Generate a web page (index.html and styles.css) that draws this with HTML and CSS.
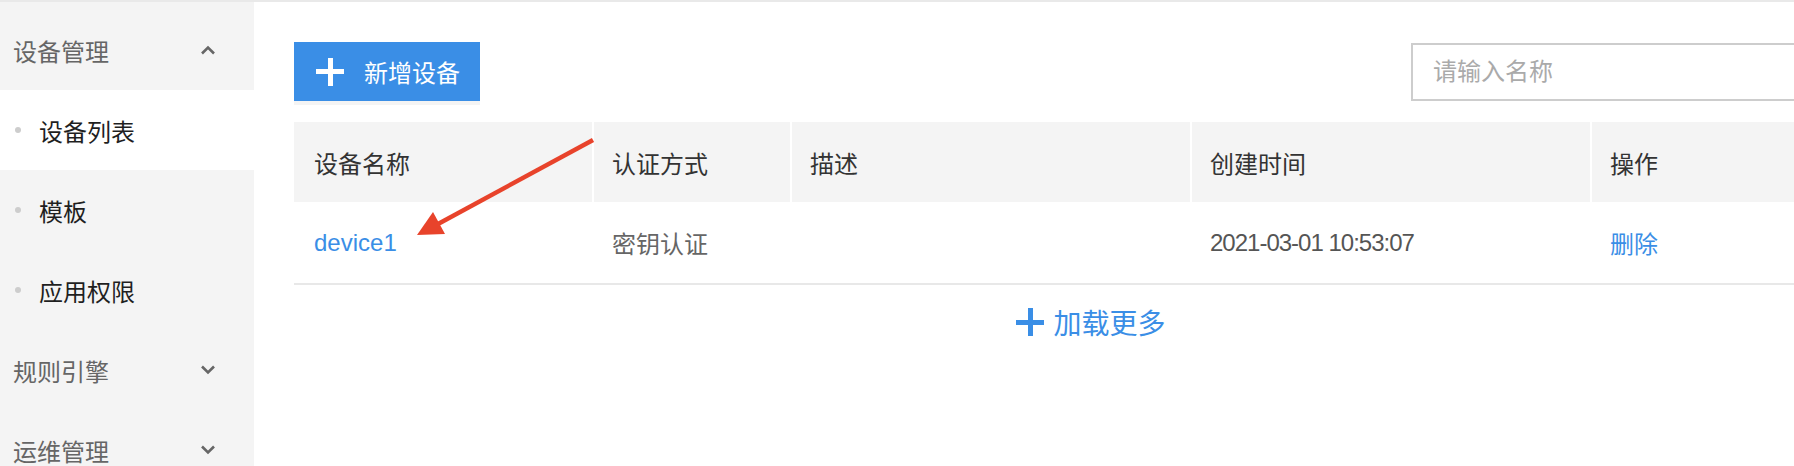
FILE: index.html
```html
<!DOCTYPE html>
<html lang="zh-CN">
<head>
  <meta charset="UTF-8" />
  <meta name="viewport" content="width=device-width, initial-scale=1.0"/>
  <title>设备列表</title>
  <link rel="stylesheet" href="styles.css">
</head>
<body>
  <div class="page">
    <!-- sidebar -->
    <div class="side">
      <div class="group-title">
        <span>设备管理</span>
        <svg class="chev" width="16" height="10" viewBox="0 0 16 10"><polyline points="2,8.5 8,2.5 14,8.5" /></svg>
      </div>
      <div class="sub-item active">设备列表</div>
      <div class="sub-item">模板</div>
      <div class="sub-item">应用权限</div>
      <div class="group-title">
        <span>规则引擎</span>
        <svg class="chev" width="16" height="10" viewBox="0 0 16 10"><polyline points="2,1.5 8,7.5 14,1.5" /></svg>
      </div>
      <div class="group-title">
        <span>运维管理</span>
        <svg class="chev" width="16" height="10" viewBox="0 0 16 10"><polyline points="2,1.5 8,7.5 14,1.5" /></svg>
      </div>
    </div>

    <!-- main -->
    <div class="main">
      <div class="content">
        <div class="toolbar">
          <button class="add-btn"><span class="plus"></span>新增设备</button>
          <input class="search" type="text" placeholder="请输入名称" />
        </div>

        <div class="table">
          <div class="row head">
            <div class="cell">设备名称</div>
            <div class="cell">认证方式</div>
            <div class="cell">描述</div>
            <div class="cell">创建时间</div>
            <div class="cell">操作</div>
          </div>
          <div class="row body">
            <div class="cell"><a class="link">device1</a></div>
            <div class="cell muted">密钥认证</div>
            <div class="cell"></div>
            <div class="cell date">2021-03-01 10:53:07</div>
            <div class="cell"><a class="link">删除</a></div>
          </div>
        </div>

        <div class="more">
          <span class="plus small"></span>加载更多
        </div>
      </div>
    </div>

    <!-- annotation arrow -->
    <svg class="arrow" width="1794" height="466" viewBox="0 0 1794 466">
      <line x1="593" y1="140" x2="438" y2="224" stroke="#e8432b" stroke-width="4.5" />
      <polygon points="417,235 433,212 445,234" fill="#e8432b" />
    </svg>
  </div>
</body>
</html>
```

FILE: styles.css
```css
* {
  box-sizing: border-box;
}
body {
  margin: 0;
  overflow: hidden;
  font-family: "Liberation Sans", "Noto Sans CJK SC", sans-serif;
  font-size: 24px;
  color: #333;
  background: #fff;
}
.page {
  position: relative;
  display: flex;
  height: 100vh;
  overflow: hidden;
  border-top: 2px solid #e9e9e9;
}

/* sidebar */
.side {
  flex: 0 0 254px;
  background: #f4f4f4;
  padding-top: 8px;
  overflow: hidden;
}
.group-title {
  height: 80px;
  display: flex;
  align-items: center;
  justify-content: space-between;
  padding: 0 38px 0 13px;
  color: #666;
}
.chev polyline {
  fill: none;
  stroke: #666;
  stroke-width: 2.6;
}
.sub-item {
  height: 80px;
  display: flex;
  align-items: center;
  padding-left: 15px;
  color: #1f1f1f;
}
.sub-item::before {
  content: "";
  width: 6px;
  height: 6px;
  border-radius: 50%;
  background: #cdcdcd;
  margin-right: 18px;
}
.sub-item.active {
  background: #fff;
}

/* main */
.main {
  flex: 1;
  overflow: hidden;
  padding: 40px 0 0 40px;
}
.content {
  width: 1594px;
}
.toolbar {
  display: flex;
  align-items: center;
  justify-content: space-between;
  margin-bottom: 21px;
}
.add-btn {
  display: flex;
  align-items: center;
  height: 59px;
  width: 186px;
  padding: 0 0 0 22px;
  border: none;
  background: #3a8ee6;
  color: #fff;
  font-family: inherit;
  font-size: 24px;
  box-shadow: 0 4px 0 #f4f4f4;
}
.plus {
  position: relative;
  display: inline-block;
  width: 28px;
  height: 28px;
  margin-right: 20px;
}
.plus::before,
.plus::after {
  content: "";
  position: absolute;
  background: #fff;
}
.plus::before {
  left: 0;
  right: 0;
  top: 11.5px;
  height: 5px;
}
.plus::after {
  top: 0;
  bottom: 0;
  left: 11.5px;
  width: 5px;
}
.search {
  width: 477px;
  height: 58px;
  border: 2px solid #cdcdcd;
  padding: 0 20px;
  font-family: inherit;
  font-size: 24px;
  outline: none;
}
.search::placeholder {
  color: #aaa;
}

/* table */
.row {
  display: grid;
  grid-template-columns: 298px 198px 400px 400px 298px;
}
.head {
  height: 80px;
  background: #f4f4f4;
}
.head .cell + .cell {
  border-left: 2px solid #fff;
}
.body {
  height: 83px;
  border-bottom: 2px solid #e8e8e8;
}
.cell {
  display: flex;
  align-items: center;
  padding-left: 20px;
}
.head .cell + .cell {
  padding-left: 18px;
}
.link {
  color: #3a8ee6;
  cursor: pointer;
}
.muted {
  color: #666;
}
.date {
  color: #555;
  letter-spacing: -1px;
}

.more {
  height: 74px;
  display: flex;
  align-items: center;
  justify-content: center;
  font-size: 28px;
  color: #3a8ee6;
}
.plus.small {
  margin-right: 9px;
}
.plus.small::before,
.plus.small::after {
  background: #3a8ee6;
}

.arrow {
  position: absolute;
  left: 0;
  top: -2px;
  pointer-events: none;
}
```
